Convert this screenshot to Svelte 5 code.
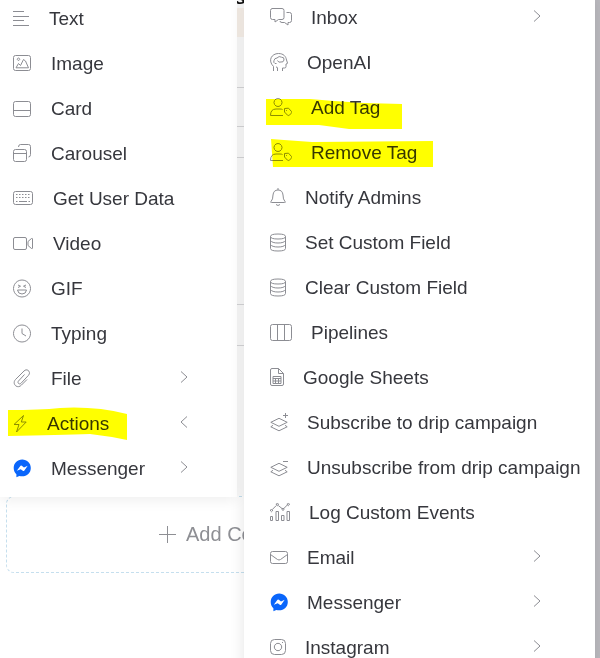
<script lang="ts">
	type IconShape = { w: number; d: string };
	type Item = {
		label: string;
		icon: string;
		arrow?: 'left' | 'right';
		mark?: string;
	};

	// outline icons share a 21px high box, each with its own width
	const icons: Record<string, IconShape> = {
		text: { w: 16, d: 'M0 3.5h11M0 8.5h16M0 12.5h11M0 17.5h16' },
		image: {
			w: 18,
			d: 'M2.500 2.500h13q2 0 2 2v11q0 2-2 2h-13q-2 0-2-2v-11q0-2 2-2zM5.500 5a1.200 1.200 0 1 0 .01 0M3 14.800L5.500 10.500l2 2L10.500 6.500l2 1.500 3 6.800z'
		},
		card: {
			w: 18,
			d: 'M2.500 3.500h13q2 0 2 2v11q0 2-2 2h-13q-2 0-2-2v-11q0-2 2-2zM.5 12.500h17'
		},
		carousel: {
			w: 18,
			d: 'M2.500 6.500h9q2 0 2 2v8q0 2-2 2h-9q-2 0-2-2v-8q0-2 2-2zM.5 10.500h13M5.500 4q0-2.500 2-2.500h8q2 0 2 2v8q0 2.500-2 2.500'
		},
		keyboard: {
			w: 20,
			d: 'M2.500 3.500h15q2 0 2 2v9q0 2-2 2h-15q-2 0-2-2v-9q0-2 2-2zM3 6.500h1.500m1.500 0h1.500m1.500 0h1.500m1.500 0h1.500m1.500 0h1.500M3 9.500h1.500m1.500 0h1.500m1.500 0h1.500m1.500 0h1.500m1.500 0h1.500M3 13.500h1.500m1.500 0h8m1.500 0h1.500'
		},
		video: {
			w: 20,
			d: 'M2 4.500h10q1.500 0 1.500 1.500v9q0 1.500-1.500 1.500H2Q.5 16.500.5 15V6Q.5 4.500 2 4.500zM18.500 5.500q1-.5 1 .5v9q0 1-1 .5L15 12.500v-4z'
		},
		laugh: {
			w: 18,
			d: 'M9 2a8.500 8.500 0 1 0 .01 0M5 7l2.500 1.200-2.500 1.300M13 7l-2.500 1.200 2.500 1.300M4.500 12h9q-.5 4-4.500 4t-4.500-4z'
		},
		clock: { w: 18, d: 'M9 2a8.500 8.500 0 1 0 .01 0M9 5.500v5l4 2.500' },
		clip: {
			w: 18,
			d: 'M11.500 6.500l-6 6.500c-1.500 1.800.7 4 2.500 2.300l7.500-8c3-3.300-1.500-7.500-4.500-4.300L2.500 11.500c-4 4.500 2 10 6 5.500l5.500-5.500'
		},
		bolt: { w: 14, d: 'M10.500 2.500l-9.500 9h5L3.500 19l9.700-10H8.300z' },
		chats: {
			w: 22,
			d: 'M2 1.500h10q2 0 2 2v7q0 2-2 2H8.500L5 15v-2.500H2.500q-2 0-2-2v-7q0-2 2-2M16.500 5.500h3q2 0 2 2v6q0 2-2 2H18V18l-3.500-2.500H12q-2 0-2-1.500'
		},
		brain: {
			w: 18,
			d: 'M3.500 19v-4.500C-2.500 8.500 1.500 1.500 8.500 1.500c5 0 7.500 3 8 6.500l1 3q.2.800-1.500 1v2.500q0 1.500-1.500 1.500H12.500V19M7.500 19v-3q0-1-1.500-1M6.500 11.500h-1.500q-2-1-1-3 .5-2.500 3-2.500 2-2.500 4.500-.8 3-.2 2.500 2.800-.5 2.500-3 2-2.500 1-3.500-1.500'
		},
		userTag: {
			w: 22,
			d: 'M8 1.500a4 4 0 1 0 .01 0M13 18.500H.5q0-6.500 5.500-6.500h4q1.500 0 2.500.5M14.500 11.500l4-.3 3 3.300q.5 1-.3 2l-2 1.700q-1 .7-1.700 0L14.500 15zM16.500 13v.8'
		},
		bell: {
			w: 16,
			d: 'M8 1v2M8 3Q3.500 3 3 8q0 4.500-2 6.500-1 1 .5 1h13q1.500 0 .5-1-2-2-2-6.500Q12.500 3 8 3M6 17.500q2 2 4 0'
		},
		database: {
			w: 16,
			d: 'M.5 4.500Q.5 2 8 2t7.500 2.500T8 7 .5 4.500v12Q.5 19 8 19t7.500-2.500v-12M.5 8.500Q2 11 8 11t7.500-2.500M.5 12.500Q2 15 8 15t7.500-2.500'
		},
		columns: {
			w: 22,
			d: 'M2.500 2.500h17q2 0 2 2v12q0 2-2 2h-17q-2 0-2-2v-12q0-2 2-2zM7.500 2.500v16M14.500 2.500v16'
		},
		sheet: {
			w: 14,
			d: 'M2 1.500h6.500l5 5v10.500q0 1.500-1.500 1.500H2Q.5 18.500.5 17V3Q.5 1.500 2 1.500zM8.500 1.500v5h5M3 9.500h8v7H3zM3 11.500h8M3 14h8M5.500 11.500v5M8.500 11.500v5'
		},
		layersPlus: {
			w: 18,
			d: 'M.8 10.300L9 6.300l8.200 4L9 14.300zM3 13.300L.8 14.800l8.200 4 8.200-4-2.200-1.500M15.500 1v5M13 3.500h5'
		},
		layersMinus: {
			w: 18,
			d: 'M.8 10.300L9 6.300l8.200 4L9 14.300zM3 13.300L.8 14.800l8.200 4 8.200-4-2.200-1.500M13 4.500h5'
		},
		chart: {
			w: 20,
			d: 'M.5 14.500h2v4h-2zM6 9.500h2.500v9H6zM11.500 13.500H14v5h-2.500zM17 9.500h2.500v9H17zM2.300 7.500l4-4M8.300 3.500l3.700 3M13.800 6.500l3.500-3.500M1.500 7.500a1 1 0 1 0 .01 0M7.300 1.500a1 1 0 1 0 .01 0M13 6.300a1 1 0 1 0 .01 0M18.300 1.500a1 1 0 1 0 .01 0'
		},
		mail: {
			w: 18,
			d: 'M2.500 4.500h13q2 0 2 2v8q0 2-2 2h-13q-2 0-2-2v-8q0-2 2-2zM.5 7.500l7 5q1.500 1 3 0l7-5'
		},
		instagram: {
			w: 16,
			d: 'M4.500 2.500h7q4 0 4 4v7q0 4-4 4h-7q-4 0-4-4v-7q0-4 4-4zM8 6.300a3.700 3.700 0 1 0 .01 0M12 5.500h1'
		}
	};

	const blocks: Item[] = [
		{ label: 'Text', icon: 'text' },
		{ label: 'Image', icon: 'image' },
		{ label: 'Card', icon: 'card' },
		{ label: 'Carousel', icon: 'carousel' },
		{ label: 'Get User Data', icon: 'keyboard' },
		{ label: 'Video', icon: 'video' },
		{ label: 'GIF', icon: 'laugh' },
		{ label: 'Typing', icon: 'clock' },
		{ label: 'File', icon: 'clip', arrow: 'right' },
		{
			label: 'Actions',
			icon: 'bolt',
			arrow: 'left',
			mark: 'M8 9Q40 9 60 7Q95 5 127 13V39Q108 35 90 33Q60 34 8 35z'
		},
		{ label: 'Messenger', icon: 'messenger', arrow: 'right' }
	];

	const actions: Item[] = [
		{ label: 'Inbox', icon: 'chats', arrow: 'right' },
		{ label: 'OpenAI', icon: 'brain' },
		{
			label: 'Add Tag',
			icon: 'userTag',
			mark: 'M22 14H66L90 16L120 18L158 19V44H105Q90 42 75 40H22z'
		},
		{
			label: 'Remove Tag',
			icon: 'userTag',
			mark: 'M27 9L40 10L68 12L189 11V37L29 37z'
		},
		{ label: 'Notify Admins', icon: 'bell' },
		{ label: 'Set Custom Field', icon: 'database' },
		{ label: 'Clear Custom Field', icon: 'database' },
		{ label: 'Pipelines', icon: 'columns' },
		{ label: 'Google Sheets', icon: 'sheet' },
		{ label: 'Subscribe to drip campaign', icon: 'layersPlus' },
		{ label: 'Unsubscribe from drip campaign', icon: 'layersMinus' },
		{ label: 'Log Custom Events', icon: 'chart' },
		{ label: 'Email', icon: 'mail', arrow: 'right' },
		{ label: 'Messenger', icon: 'messenger', arrow: 'right' },
		{ label: 'Instagram', icon: 'instagram', arrow: 'right' }
	];
</script>

{#snippet icon(name: string)}
	{#if name === 'messenger'}
		<svg class="icon" width="18" height="21" viewBox="0 0 18 21" aria-hidden="true">
			<path class="brand" d="M9.200 1.500C4.300 1.500.7 5.100.7 10c0 2.600 1 4.700 2.700 6.300v3l2.900-1.400c6 1.700 11.500-2 11.500-7.900 0-4.900-3.700-8.500-8.600-8.500z" />
			<path class="flash" d="M3.800 12.800l3.700-5q.6-.6 1.300-.1l2.200 1.700 3.700-1.600-3.500 4.900q-.6.700-1.400.1L7.700 11.200z" />
		</svg>
	{:else}
		<svg
			class="icon"
			width={icons[name].w}
			height="21"
			viewBox="0 0 {icons[name].w} 21"
			aria-hidden="true"
		>
			<path d={icons[name].d} />
		</svg>
	{/if}
{/snippet}

{#snippet menu(items: Item[])}
	{#each items as item}
		<li>
			<button type="button" class="item">
				{@render icon(item.icon)}
				<span class="label">{item.label}</span>
				{#if item.arrow}
					<svg class="arrow" width="8" height="15" viewBox="0 0 8 15" aria-hidden="true">
						<path d={item.arrow === 'right' ? 'M1 .5l6 5.500-6 5.500' : 'M7 .5L1 6l6 5.500'} />
					</svg>
				{/if}
				{#if item.mark}
					<svg class="marker" aria-hidden="true"><path d={item.mark} /></svg>
				{/if}
			</button>
		</li>
	{/each}
{/snippet}

<main class="page">
	<div class="builder">
		<section class="preview">
			<h2>s</h2>
			<div class="banner"></div>
			<div class="line first"></div>
			<div class="line"></div>
			<div class="line short"></div>
			<div class="line tall"></div>
			<div class="line"></div>
		</section>
		<button type="button" class="add">
			<svg width="17" height="17" viewBox="0 0 17 17" aria-hidden="true">
				<path d="M8.500 0v17M0 8.500h17" />
			</svg>
			Add Content
		</button>
	</div>

	<ul class="menu blocks">{@render menu(blocks)}</ul>
	<ul class="menu actions">{@render menu(actions)}</ul>
	<div class="track"></div>
</main>

<style>
	:global(body) {
		margin: 0;
		background: #fff;
	}

	.page {
		position: relative;
		display: flex;
		height: 100vh;
		overflow: hidden;
		font-family: 'Liberation Sans', Arial, sans-serif;
		font-size: 19px;
		color: #36373d;
	}

	.builder {
		flex: 1;
		padding: 0 6px;
	}

	.preview {
		display: flow-root;
		height: 496px;
		box-sizing: border-box;
		background: #fdfdfd;
	}

	/* the heading is scrolled up under the top edge */
	h2 {
		margin: -12px 0 0;
		padding-left: 229px;
		font-size: 19px;
		line-height: 20px;
		color: #111;
	}

	.banner {
		height: 29px;
		background: #faf3ec;
	}

	.line {
		height: 38px;
		border-bottom: 1px solid #d8d8da;
	}

	.line.first {
		height: 50px;
	}

	.line.short {
		height: 30px;
	}

	.line.tall {
		height: 146px;
	}

	.line:last-child {
		height: 40px;
	}

	.add {
		display: flex;
		align-items: center;
		gap: 10px;
		width: 100%;
		height: 77px;
		padding: 0 0 0 152px;
		border: 1px dashed #c5dfee;
		border-radius: 8px;
		background: #fff;
		font: inherit;
		font-size: 20px;
		color: #8e8f94;
	}

	.add path {
		fill: none;
		stroke: #8e8f94;
	}

	.menu {
		position: absolute;
		margin: 0;
		padding: 0;
		list-style: none;
		background: #fff;
	}

	.blocks {
		top: -4px;
		left: 0;
		width: 237px;
		padding-bottom: 6px;
		box-shadow: 0 2px 14px rgba(0, 0, 0, 0.08);
	}

	.actions {
		top: -5px;
		left: 244px;
		right: 5px;
		box-shadow: 0 2px 14px rgba(0, 0, 0, 0.11);
	}

	.item {
		position: relative;
		display: flex;
		align-items: center;
		gap: 20px;
		width: 100%;
		height: 45px;
		padding: 0 49px 0 13px;
		border: 0;
		background: none;
		font: inherit;
		color: inherit;
		text-align: left;
		white-space: nowrap;
		cursor: pointer;
	}

	.actions .item {
		gap: 19px;
		padding: 0 54px 0 26px;
	}

	.label {
		flex: 1;
		min-width: 0;
	}

	.icon,
	.arrow {
		flex: none;
		fill: none;
		stroke: #8c8d93;
		stroke-linejoin: round;
	}

	.brand {
		fill: #0a66fb;
		stroke: none;
	}

	.flash {
		fill: #fff;
		stroke: none;
	}

	.marker {
		position: absolute;
		inset: 0;
		width: 100%;
		height: 100%;
		fill: #ff0;
		mix-blend-mode: multiply;
		pointer-events: none;
	}

	.track {
		width: 5px;
		background: #bbbabf;
	}
</style>
